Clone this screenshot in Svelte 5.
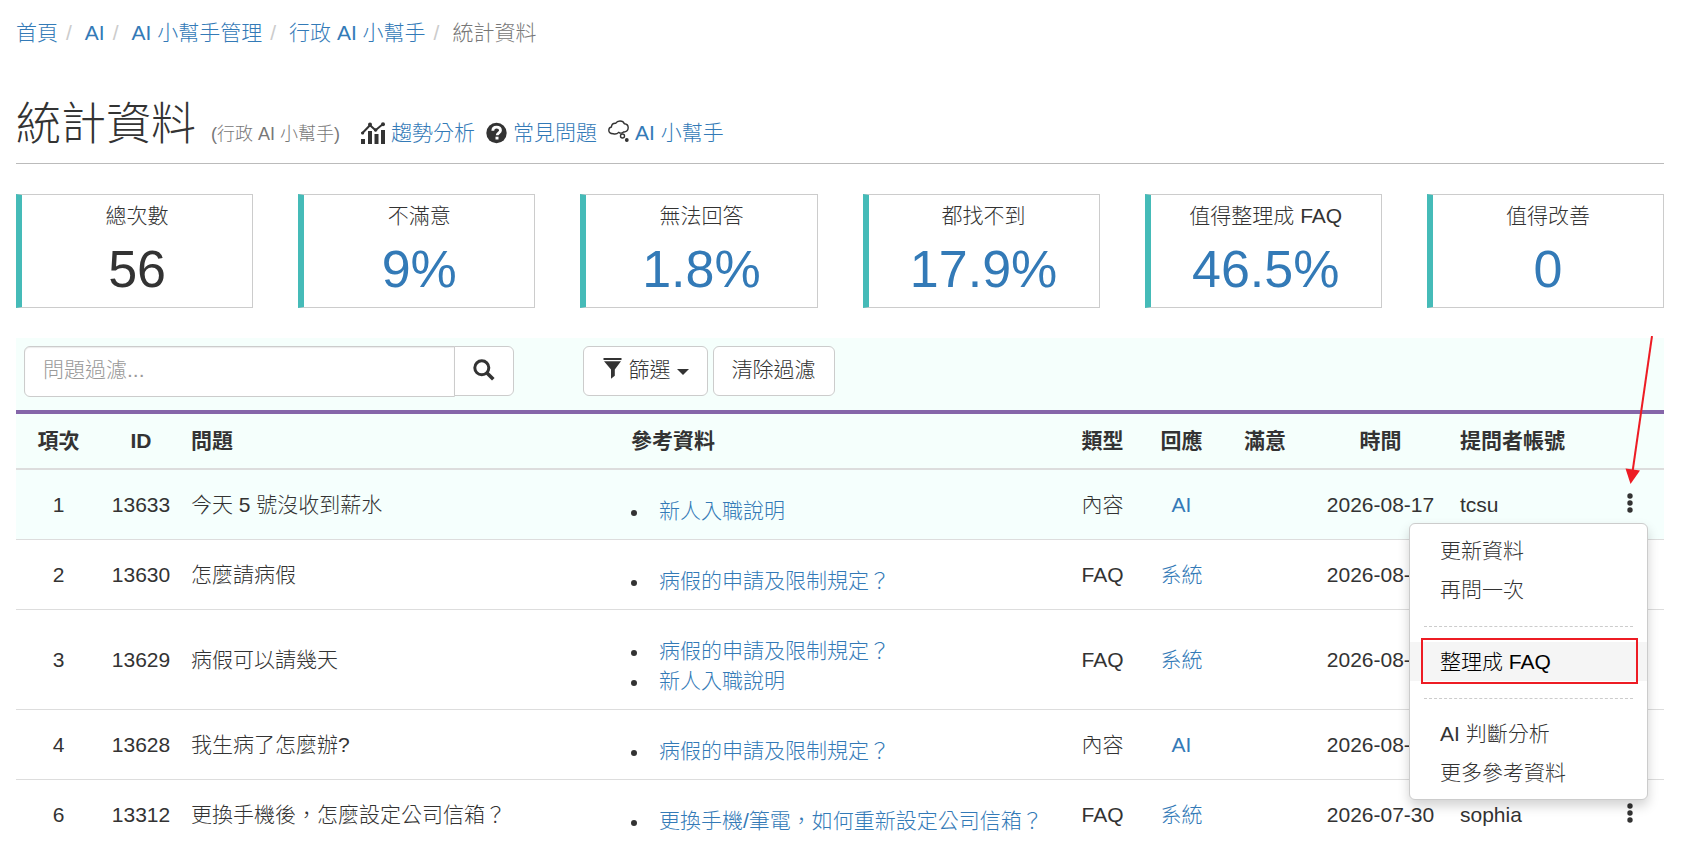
<script lang="ts">
  interface Row {
    no: number
    id: number
    question: string
    refs: string[]
    type: string
    reply: string
    date: string
    account: string
  }

  const crumbs = ['首頁', 'AI', 'AI 小幫手管理', '行政 AI 小幫手']

  const stats = [
    { label: '總次數', value: '56', link: false },
    { label: '不滿意', value: '9%', link: true },
    { label: '無法回答', value: '1.8%', link: true },
    { label: '都找不到', value: '17.9%', link: true },
    { label: '值得整理成 FAQ', value: '46.5%', link: true },
    { label: '值得改善', value: '0', link: true }
  ]

  const rows: Row[] = [
    { no: 1, id: 13633, question: '今天 5 號沒收到薪水', refs: ['新人入職說明'], type: '內容', reply: 'AI', date: '2026-08-17', account: 'tcsu' },
    { no: 2, id: 13630, question: '怎麼請病假', refs: ['病假的申請及限制規定？'], type: 'FAQ', reply: '系統', date: '2026-08-17', account: '' },
    { no: 3, id: 13629, question: '病假可以請幾天', refs: ['病假的申請及限制規定？', '新人入職說明'], type: 'FAQ', reply: '系統', date: '2026-08-17', account: '' },
    { no: 4, id: 13628, question: '我生病了怎麼辦?', refs: ['病假的申請及限制規定？'], type: '內容', reply: 'AI', date: '2026-08-17', account: '' },
    { no: 6, id: 13312, question: '更換手機後，怎麼設定公司信箱？', refs: ['更換手機/筆電，如何重新設定公司信箱？'], type: 'FAQ', reply: '系統', date: '2026-07-30', account: 'sophia' }
  ]

  let keyword = $state('')
  let openRow = $state<number | null>(1)

  function toggle(no: number) {
    openRow = openRow === no ? null : no
  }
</script>

<div class="page">
  <nav aria-label="breadcrumb">
    <ol class="breadcrumb">
      {#each crumbs as crumb}
        <li><a href="#top">{crumb}</a></li>
      {/each}
      <li class="current">統計資料</li>
    </ol>
  </nav>

  <header class="page-header">
    <h1>統計資料</h1>
    <small>(行政 AI 小幫手)</small>
    <div class="header-links">
      <span class="header-link">
        <svg width="24" height="22" viewBox="0 0 24 22" fill="#333">
          <path d="M1 11.5L9 3.2l5.5 5L22 2" fill="none" stroke="#333" stroke-width="2" />
          <circle cx="1.6" cy="11" r="1.6" /><circle cx="9" cy="2.6" r="2" />
          <circle cx="14.6" cy="8" r="1.8" /><circle cx="22" cy="2.2" r="2" />
          <path d="M0 17h4v5H0zM7 9h4v13H7zM13.500 12h4v10h-4zM20 8h4v14h-4z" />
        </svg>
        <a href="#trend">趨勢分析</a>
      </span>
      <span class="header-link">
        <svg width="21" height="22" viewBox="0 0 21 22">
          <circle cx="10.500" cy="11" r="10.200" fill="#333" />
          <path d="M6.800 8.700C6.800 6.300 8.300 5.100 10.600 5.100s3.900 1.300 3.900 3.300c0 2.400-3.300 2.500-3.300 4.900" fill="none" stroke="#fff" stroke-width="2.800" />
          <path d="M9.500 14.700h3v2.800h-3z" fill="#fff" />
        </svg>
        <a href="#faq">常見問題</a>
      </span>
      <span class="header-link">
        <svg width="21" height="26" viewBox="0 0 21 26" fill="none" stroke="#333" stroke-width="1.400">
          <path d="M5.200 13.800C2.600 13.600.8 12.300.8 10.200c0-1.700 1.100-2.900 2.600-3.200C3.600 4.700 5.400 3.200 7.600 3.300 8.600 1.700 10.200 1 12 1c2.200 0 3.700 1 4.300 2.700 2.300.2 3.900 1.800 3.900 4 0 2.800-2.200 4.500-4.700 4.200-1.300 1.300-3.300 1.500-4.800.5-1.200 1.300-3.400 1.900-5.500 1.400z" />
          <circle cx="14.500" cy="16" r="2" />
          <circle cx="18.800" cy="20" r="1.200" fill="#333" />
        </svg>
        <a href="#assistant">AI 小幫手</a>
      </span>
    </div>
  </header>

  <section class="stats">
    {#each stats as stat}
      <div class="stat">
        <div class="stat-label">{stat.label}</div>
        <div class="stat-value">
          {#if stat.link}<a href="#stat">{stat.value}</a>{:else}{stat.value}{/if}
        </div>
      </div>
    {/each}
  </section>

  <div class="toolbar">
    <form class="search" onsubmit={(e) => e.preventDefault()}>
      <input type="text" aria-label="問題過濾" placeholder="問題過濾..." bind:value={keyword} />
      <button class="btn search-btn" type="submit" aria-label="搜尋">
        <svg width="22" height="22" viewBox="0 0 22 22" fill="none" stroke="#333">
          <circle cx="8.800" cy="8.800" r="7" stroke-width="3" />
          <path d="M14 14l6.300 6.300" stroke-width="3.600" />
        </svg>
      </button>
    </form>
    <div class="actions">
      <button class="btn" type="button">
        <svg width="21" height="23" viewBox="0 0 21 23" fill="#333">
          <path d="M1.500 0h18v2h-18zM2 3.200h17l-6.200 8.300v6.200L9 20.800v-9.300z" />
        </svg>
        篩選
        <span class="caret"></span>
      </button>
      <button class="btn" type="button" onclick={() => (keyword = '')}>清除過濾</button>
    </div>
  </div>

  <table>
    <colgroup>
      <col class="w-no" />
      <col class="w-id" />
      <col />
      <col />
      <col class="w-type" />
      <col class="w-reply" />
      <col class="w-rating" />
      <col class="w-date" />
      <col class="w-account" />
      <col class="w-more" />
    </colgroup>
    <thead>
      <tr>
        <th>項次</th>
        <th>ID</th>
        <th class="left">問題</th>
        <th class="left">參考資料</th>
        <th>類型</th>
        <th>回應</th>
        <th>滿意</th>
        <th>時間</th>
        <th class="left">提問者帳號</th>
        <th></th>
      </tr>
    </thead>
    <tbody>
      {#each rows as row (row.no)}
        <tr class:active={openRow === row.no}>
          <td>{row.no}</td>
          <td>{row.id}</td>
          <td class="left">{row.question}</td>
          <td class="left">
            <ul class="refs">
              {#each row.refs as ref}
                <li><a href="#ref">{ref}</a></li>
              {/each}
            </ul>
          </td>
          <td>{row.type}</td>
          <td><a href="#reply">{row.reply}</a></td>
          <td></td>
          <td>{row.date}</td>
          <td class="left">{row.account}</td>
          <td class="more">
            <button class="dots" type="button" aria-label="更多" onclick={() => toggle(row.no)}>
              <svg width="6" height="20" viewBox="0 0 6 20" fill="#333">
                <circle cx="3" cy="3" r="2.700" /><circle cx="3" cy="10" r="2.700" /><circle cx="3" cy="17" r="2.700" />
              </svg>
            </button>
            {#if openRow === row.no}
              <svg class="arrow" width="40" height="150" viewBox="0 0 40 150">
                <path d="M32 0L12.500 136" stroke="#ed1c24" stroke-width="2" />
                <path d="M5.500 132.500l14.500 2L10.500 148z" fill="#ed1c24" />
              </svg>
              <ul class="menu">
                <li><a href="#update">更新資料</a></li>
                <li><a href="#again">再問一次</a></li>
                <li class="divider"></li>
                <li class="marked"><a href="#to-faq">整理成 FAQ</a></li>
                <li class="divider"></li>
                <li><a href="#analysis">AI 判斷分析</a></li>
                <li><a href="#more-refs">更多參考資料</a></li>
              </ul>
            {/if}
          </td>
        </tr>
      {/each}
    </tbody>
  </table>
</div>

<style>
  :global(body) {
    background: #fff;
  }

  .page {
    padding: 18px 19px 0 16px;
    font: 300 21px/30px "Liberation Sans", "Noto Sans CJK TC", sans-serif;
    color: #333;
  }

  a {
    color: #337ab7;
    text-decoration: none;
  }

  svg {
    flex: none;
  }

  .breadcrumb {
    display: flex;
    margin: 0;
    padding: 0;
    list-style: none;
  }

  .breadcrumb li + li::before {
    content: '/';
    padding: 0 13px 0 8px;
    color: #ccc;
  }

  .breadcrumb .current {
    color: #777;
  }

  .page-header {
    display: flex;
    align-items: baseline;
    margin-top: 52px;
    padding-bottom: 13px;
    border-bottom: 1px solid #bbb;
  }

  h1 {
    margin: 0;
    font-size: 45px;
    font-weight: 300;
    line-height: 50px;
  }

  small {
    margin-left: 15px;
    font-size: 18px;
    color: #777;
  }

  .header-links {
    display: flex;
    gap: 11px;
    margin-left: 21px;
  }

  .header-link {
    display: flex;
    align-items: baseline;
    gap: 6px;
  }

  .header-link svg {
    align-self: center;
  }

  .stats {
    display: grid;
    grid-template-columns: repeat(6, 1fr);
    gap: 45px;
    margin: 30px 0;
  }

  .stat {
    padding: 6px 0 8px;
    border: 1px solid #ccc;
    border-left: 6px solid #45bbb8;
    text-align: center;
  }

  .stat-value {
    margin-top: 8px;
    font-size: 52px;
    line-height: 60px;
  }

  .toolbar {
    display: flex;
    align-items: flex-start;
    gap: 69px;
    padding: 8px 8px 13px;
    background: #f5fffc;
    border-bottom: 4px solid #8566a9;
  }

  .search {
    display: flex;
    align-items: flex-start;
    width: 30%;
  }

  input {
    flex: 1;
    min-width: 0;
    height: 51px;
    box-sizing: border-box;
    padding: 0 18px 4px;
    border: 1px solid #ccc;
    border-radius: 6px 0 0 6px;
    box-shadow: inset 0 1px 1px rgba(0, 0, 0, 0.08);
    background: #fff;
    font: inherit;
    color: #555;
  }

  input::placeholder {
    color: #999;
  }

  .btn {
    display: flex;
    align-items: center;
    gap: 6px;
    height: 50px;
    box-sizing: border-box;
    padding: 0 18px 3px;
    border: 1px solid #ccc;
    border-radius: 6px;
    background: #fff;
    font: inherit;
    color: #333;
    cursor: pointer;
  }

  .search-btn {
    margin-left: -1px;
    border-radius: 0 6px 6px 0;
  }

  .actions {
    display: flex;
    gap: 5px;
  }

  .caret {
    margin-top: 4px;
    border-top: 6px solid #333;
    border-left: 6px solid transparent;
    border-right: 6px solid transparent;
  }

  table {
    width: 100%;
    table-layout: fixed;
    border-collapse: separate;
    border-spacing: 0;
  }

  .w-no {
    width: 85px;
  }

  .w-id {
    width: 80px;
  }

  .w-type {
    width: 83px;
  }

  .w-reply {
    width: 75px;
  }

  .w-rating {
    width: 92px;
  }

  .w-date {
    width: 139px;
  }

  .w-account {
    width: 146px;
  }

  .w-more {
    width: 68px;
  }

  th,
  td {
    padding: 12px 8px;
    text-align: center;
    vertical-align: middle;
    white-space: nowrap;
  }

  th {
    border-bottom: 2px solid #ddd;
    background: #f5fffc;
    font-weight: 700;
  }

  td {
    border-bottom: 1px solid #ddd;
  }

  tr:last-child td {
    border-bottom: 0;
  }

  .left {
    padding-left: 10px;
    text-align: left;
  }

  .active td {
    background: #f5fffd;
  }

  .refs {
    margin: 14px 0 1px;
    padding: 0;
    list-style: none;
  }

  .refs li {
    display: flex;
    align-items: center;
    gap: 22px;
  }

  .refs li::before {
    content: '';
    width: 6px;
    height: 6px;
    margin-top: 4px;
    border-radius: 50%;
    background: #333;
  }

  .more {
    position: relative;
  }

  .dots {
    display: inline-flex;
    padding: 4px 8px;
    border: 0;
    background: none;
    cursor: pointer;
  }

  .arrow {
    position: absolute;
    top: -134px;
    right: 4px;
    z-index: 2;
    pointer-events: none;
  }

  .menu {
    position: absolute;
    top: 53px;
    right: 16px;
    z-index: 1;
    width: 237px;
    margin: 0;
    padding: 7px 0;
    border: 1px solid #ccc;
    border-radius: 6px;
    background: #fff;
    box-shadow: 0 6px 12px rgba(0, 0, 0, 0.175);
    list-style: none;
    text-align: left;
  }

  .menu a {
    display: block;
    padding: 5px 30px 4px;
    color: #333;
  }

  .menu .divider {
    margin: 17px 14px 15px;
    border-top: 1px dashed #ccc;
  }

  .marked {
    position: relative;
    background: #f5f5f5;
  }

  .menu .marked a {
    color: #000;
  }

  /* red frame around the suggested action */
  .marked::after {
    content: '';
    position: absolute;
    inset: -4px 9px -3px 11px;
    border: 2px solid #ed1c24;
    pointer-events: none;
  }
</style>
